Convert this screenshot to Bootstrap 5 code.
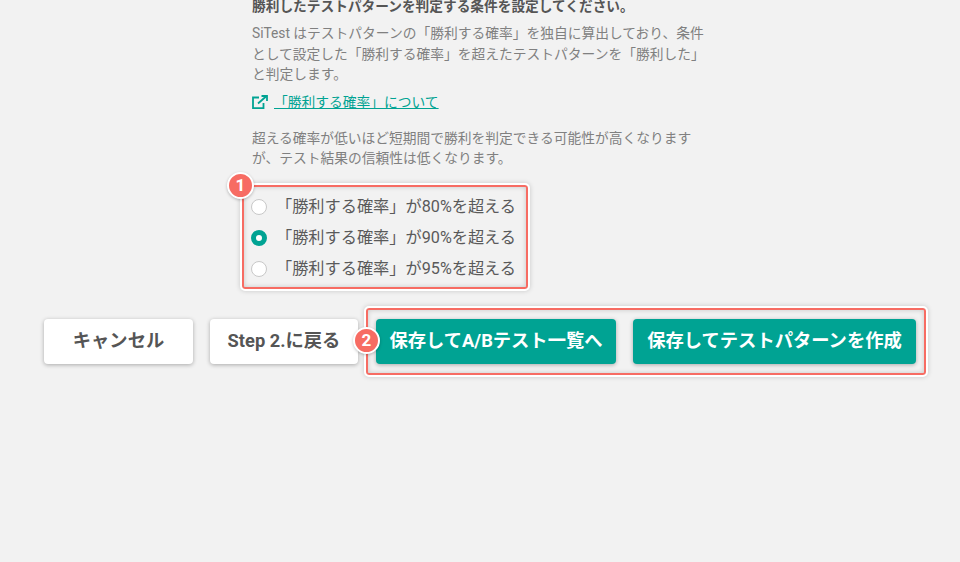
<!DOCTYPE html>
<html lang="ja">
<head>
<meta charset="utf-8">
<title>SiTest</title>
<link href="https://cdn.jsdelivr.net/npm/bootstrap@5.3.0/dist/css/bootstrap.min.css" rel="stylesheet">
<style>
html,body{height:100%;overflow:hidden}
body{background:#f2f2f2;font-family:Roboto,"Noto Sans CJK JP",sans-serif;color:#666}
.stage{position:relative;width:960px;height:562px;overflow:hidden}
.form-col{width:470px;margin-left:252px;margin-top:-4px}
.cond-title{font-size:13.7px;font-weight:700;line-height:20px;color:#555;margin:0 0 7px}
.cond-text{font-size:13.75px;line-height:20.6px;color:#808080;margin:0 0 7px}
.cond-link{font-size:13.75px;line-height:20px;color:#00a393;margin-bottom:16px}
.cond-link a{color:#00a393;margin-left:6px}
.cond-link svg{display:block}
.radio-set{margin-top:23px}
.radio-row{height:31px;font-size:16.2px;color:#5a5a5a}
.radio-dot{width:16px;height:16px;border-radius:50%;background:#fff;border:1px solid #c8c8c8;flex:none;margin:0 9px 0 -1px}
.radio-dot.on{background:#fff;border:5.5px solid #00a393}
.action-row{margin-top:34px;padding-left:44px}
.act{height:45px;border:0;border-radius:4px;font-size:18.3px;font-weight:700;box-shadow:0 1px 4px rgba(0,0,0,.3);padding:0 0 1px;display:flex;align-items:center;justify-content:center}
.act-white{background:#fff;color:#555}
.act-green{background:#00a393;color:#fff}
.w-cancel{width:149px;margin-right:17px}
.w-back{width:148px;margin-right:18px}
.w-save{width:240px;margin-right:17px}
.w-make{width:283px}
.note-box{position:absolute;border:2px solid #f76c63;outline:2px solid #fff;border-radius:3px;box-shadow:0 0 5px 2px rgba(0,0,0,.18),inset 0 0 5px rgba(0,0,0,.18);pointer-events:none}
.note-a{left:242px;top:185px;width:286px;height:104px}
.note-b{left:366px;top:308px;width:560px;height:67px}
.note-num{position:absolute;width:27px;height:27px;border-radius:50%;background:#f76c63;border:2px solid #fff;color:#fff;font-size:17px;font-weight:700;display:flex;align-items:center;justify-content:center;box-shadow:0 1px 3px rgba(0,0,0,.25);line-height:1}
.num-a{left:227px;top:172px}
.num-b{left:353px;top:327px}
</style>
</head>
<body>
<div class="stage">
  <div class="form-col">
    <p class="cond-title">勝利したテストパターンを判定する条件を設定してください。</p>
    <p class="cond-text">SiTest はテストパターンの「勝利する確率」を独自に算出しており、条件<br>として設定した「勝利する確率」を超えたテストパターンを「勝利した」<br>と判定します。</p>
    <div class="cond-link d-flex align-items-center">
      <svg width="16" height="14" viewBox="0 0 16 14" fill="none" stroke="#00a393" stroke-width="1.8"><path d="M7 2.5H1v10.6h10.5V8"/><path d="M6 8.5 14 1.5"/><path d="M9.5 1H15v5"/></svg>
      <a href="#">「勝利する確率」について</a>
    </div>
    <p class="cond-text mb-0">超える確率が低いほど短期間で勝利を判定できる可能性が高くなります<br>が、テスト結果の信頼性は低くなります。</p>
    <div class="radio-set d-flex flex-column">
      <div class="radio-row d-flex align-items-center"><span class="radio-dot"></span><span>「勝利する確率」が80%を超える</span></div>
      <div class="radio-row d-flex align-items-center"><span class="radio-dot on"></span><span>「勝利する確率」が90%を超える</span></div>
      <div class="radio-row d-flex align-items-center"><span class="radio-dot"></span><span>「勝利する確率」が95%を超える</span></div>
    </div>
  </div>
  <div class="action-row d-flex">
    <button class="act act-white w-cancel">キャンセル</button>
    <button class="act act-white w-back">Step 2.に戻る</button>
    <button class="act act-green w-save">保存してA/Bテスト一覧へ</button>
    <button class="act act-green w-make">保存してテストパターンを作成</button>
  </div>
  <div class="note-box note-a"></div>
  <div class="note-box note-b"></div>
  <div class="note-num num-a">1</div>
  <div class="note-num num-b">2</div>
</div>
<script src="https://cdn.jsdelivr.net/npm/bootstrap@5.3.0/dist/js/bootstrap.bundle.min.js"></script>
</body>
</html>
